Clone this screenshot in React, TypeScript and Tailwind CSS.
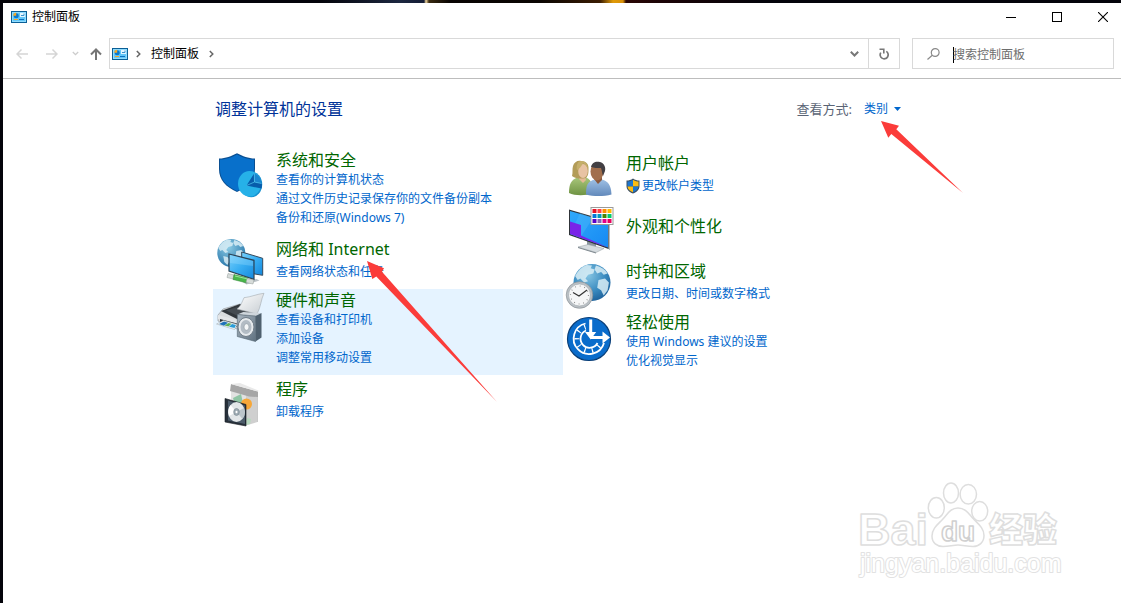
import type { ReactNode } from 'react'

type Category = {
  title: string
  links: string[]
  icon: ReactNode
  shielded?: boolean
  className?: string
}

function PanelIcon() {
  return (
    <svg className="h-3 w-4 shrink-0" viewBox="0 0 16 12" aria-hidden="true">
      <rect x="0.500" y="0.500" width="15" height="11" fill="#62c6f8" stroke="#0b5f96" />
      <rect x="1.500" y="1.500" width="13" height="9" fill="none" stroke="#8fdcff" />
      <circle cx="5.200" cy="4.800" r="2.500" fill="#0a78cc" />
      <path d="M5.200 4.800V1.800A3 3 0 0 0 2.200 4.800z" fill="#f7a823" />
      <rect x="9" y="2" width="5" height="4" fill="#e2f5ff" />
      <path d="M10 4.500h3v-2" fill="none" stroke="#3a93cf" />
      <path d="M3 8.500h4" stroke="#f7a823" />
      <path d="M8 8.500h5" stroke="#0a6fbe" />
    </svg>
  )
}

function SecurityIcon() {
  return (
    <svg className="size-12 overflow-visible" viewBox="0 0 48 48" aria-hidden="true">
      <path d="M4 6.500C11 6.500 16 4 22 1.200 28 4 33 6.500 40 6.500V17c0 11-7 18-18 23C11 35 4 28 4 17z" fill="#0a4f92" />
      <path d="M5 7.400c7 0 12-2.400 17-5 5 2.600 10 5 17 5V17c0 10-6 17-17 22C11 34 5 27 5 17z" fill="#0870cb" />
      <ellipse cx="36.200" cy="32.400" rx="11" ry="12.800" fill="#1590cf" />
      <ellipse cx="34.500" cy="31.800" rx="11.500" ry="12.800" fill="#26b1e8" />
      <path d="M39.300 21.300L31.500 33.500l15 3c.6-2.500.5-4 .2-5.500L39.500 30z" fill="#075cab" />
      <path d="M39.300 21.300L39.500 30l7 1.500c-.4-4.500-3-8.500-7.200-10.200z" fill="#1b86cf" />
      <path d="M31.500 33.500l8-3.500 7 1.500M39.300 21.300L39.500 30" fill="none" stroke="#55c8f0" strokeWidth="0.700" />
    </svg>
  )
}

function Continents() {
  return (
    <g fill="#d9eef6" opacity="0.850">
      <path d="M-13-5c2-4 5-7 9-8.500l4 .5-1 2 3 1-1 3-4 1-2 3 2 2-3 1-3-3-2 1z" />
      <path d="M3-13c4 1 7 3 9 6l-3 1-2-2-3 1-2-3z" />
      <path d="M5-2l5-1 3 3-1 6-3 4-2-4-3-2z" />
      <path d="M-8 3l4 1 3 3-3 5-3-3z" />
    </g>
  )
}

function NetworkIcon() {
  return (
    <svg className="size-12 overflow-visible" viewBox="0 0 48 48" aria-hidden="true">
      <defs>
        <radialGradient id="netGlobe" cx="0.400" cy="0.300" r="0.750">
          <stop offset="0" stopColor="#8ccbe4" />
          <stop offset="1" stopColor="#2473a8" />
        </radialGradient>
        <linearGradient id="netScreen" x1="0" y1="0" x2="1" y2="1">
          <stop offset="0" stopColor="#79d0fb" />
          <stop offset="0.500" stopColor="#38aef2" />
          <stop offset="1" stopColor="#1487dc" />
        </linearGradient>
      </defs>
      <circle cx="16.300" cy="15" r="14" fill="url(#netGlobe)" />
      <g transform="translate(16.300 15)">
        <Continents />
      </g>
      <path d="M26.700 14l21 6.300v17l-9-1.500-12-5z" fill="url(#netScreen)" stroke="#34495c" strokeWidth="1" />
      <path d="M27.500 44l14-3 3 1.500-13 4z" fill="#bcc3c8" />
      <path d="M14 16l25 6.300v19L14 33z" fill="url(#netScreen)" stroke="#2d4356" strokeWidth="1.200" />
      <path d="M15 17l23 6v5L15 25z" fill="#a5e0ff" opacity="0.300" />
      <path d="M13 35.500l8 2-1 4-8-2z" fill="#d7dcda" stroke="#919b97" strokeWidth="0.500" />
      <path d="M19 36.500l14 3.500-1 5-14-3.500z" fill="#48b64a" stroke="#2c8131" strokeWidth="0.500" />
      <path d="M20 38l13 3" stroke="#9be69a" />
      <path d="M32 40.500l7 1.500-1 4-7-1.500z" fill="#d7dcda" stroke="#919b97" strokeWidth="0.500" />
    </svg>
  )
}

function HardwareIcon() {
  return (
    <svg className="size-12 overflow-visible" viewBox="0 0 48 48" aria-hidden="true">
      <defs>
        <linearGradient id="hwPaper" x1="0" y1="0" x2="1" y2="1">
          <stop offset="0" stopColor="#ffffff" />
          <stop offset="1" stopColor="#c7cdd2" />
        </linearGradient>
        <linearGradient id="hwSpeaker" x1="0" y1="0" x2="1" y2="1">
          <stop offset="0" stopColor="#a9b5c0" />
          <stop offset="1" stopColor="#5f7180" />
        </linearGradient>
      </defs>
      <path d="M3 23l5-6 17-5 16 8v10l-19 7-19-8z" fill="#d9dcde" stroke="#8b9196" strokeWidth="0.600" />
      <path d="M6 19l19-7 16 8-19 7z" fill="#31363b" />
      <path d="M11 18.500l13-4 10 5-12 4z" fill="#454b51" />
      <path d="M29 5.700C36 5 42 2 49 1.300 46 7 46 15 42 22l-20-5c4-3 5-7 7-11.300z" fill="url(#hwPaper)" stroke="#a3a9ae" strokeWidth="0.600" />
      <path d="M3 23l19 5v4L3 27z" fill="#e3e5e7" />
      <path d="M5 27l17 4.500v3.500L5 30.500z" fill="#2b3035" />
      <path d="M1.500 32l7-3.500 14 4-3 5z" fill="#f4f7f8" stroke="#9ba4aa" strokeWidth="0.500" />
      <path d="M4 32l5-2.500 4 1.200-4 3z" fill="#1f72b8" />
      <path d="M9.500 33.500l4-2.500 3 .8-3 2.800z" fill="#5cae58" />
      <path d="M14 34.700l3-2.700 4 1-1.500 3z" fill="#2a9cd6" />
      <path d="M22.300 22.500l6-2.500 18 1-6 3z" fill="#cfd6dc" />
      <path d="M40.500 24l6-3v24.500l-6 4z" fill="#4f606e" />
      <path d="M22.300 22.500l18.200 1.500v25.500l-18.200-5z" fill="url(#hwSpeaker)" stroke="#52636f" strokeWidth="0.600" />
      <ellipse cx="31" cy="35" rx="8" ry="9.500" fill="#e6eaed" stroke="#6d7a85" />
      <ellipse cx="31" cy="35" rx="5.500" ry="7" fill="#b3bcc4" />
      <ellipse cx="31.500" cy="35" rx="2.500" ry="3.300" fill="#f5f7f8" stroke="#8b97a0" strokeWidth="0.600" />
    </svg>
  )
}

function ProgramsIcon() {
  return (
    <svg className="size-12 overflow-visible" viewBox="0 0 48 48" aria-hidden="true">
      <path d="M16 11l15 5v31l-15-4z" fill="#e2e2e2" />
      <path d="M31 16l11.500 1v27L31 47.500z" fill="#cfcfcf" />
      <path d="M31 16l11.500 1v27" fill="none" stroke="#aaaaaa" strokeWidth="0.500" />
      <path d="M16 6l27 7.500v5.500l-9-.5L15 13z" fill="#a6a6a6" />
      <path d="M16 6l9-1 18.500 7.500-.5 1z" fill="#e9e9e9" />
      <path d="M18 20l8-4 2 9-8 2z" fill="#8fc5a4" />
      <path d="M32 40l4 1-1 5-4 1z" fill="#b7d9bf" />
      <circle cx="31.500" cy="26" r="5.500" fill="#f7a738" />
      <path d="M10 20.500l21 6V48l-21-4z" fill="#27303a" stroke="#151b22" strokeWidth="0.600" />
      <path d="M13 22.500l17 5V46l-17-3.500z" fill="#4c5b6a" />
      <ellipse cx="21.500" cy="34" rx="8.300" ry="10" fill="#e2e6e8" />
      <path d="M21.500 34l-6-7c-2.500 3-3 7-1.500 11z" fill="#ffffff" />
      <path d="M21.500 34l6 7c2.500-3 3-7 1.500-11z" fill="#bcc5cb" />
      <ellipse cx="21.500" cy="34" rx="2.800" ry="3.500" fill="#9eabb3" stroke="#75848d" strokeWidth="0.600" />
      <ellipse cx="21.500" cy="34" rx="1" ry="1.300" fill="#fff" />
    </svg>
  )
}

function UsersIcon() {
  return (
    <svg className="size-12 overflow-visible" viewBox="-2 0 48 48" aria-hidden="true">
      <defs>
        <linearGradient id="womanBody" x1="0" y1="0" x2="0" y2="1">
          <stop offset="0" stopColor="#a9c77c" />
          <stop offset="1" stopColor="#6f9343" />
        </linearGradient>
        <linearGradient id="manBody" x1="0" y1="0" x2="0" y2="1">
          <stop offset="0" stopColor="#9dbfe4" />
          <stop offset="1" stopColor="#6289bb" />
        </linearGradient>
      </defs>
      <path d="M2 41c0-9 2-13 9-16h7c5 2 8 5 8 16-7 3-18 3-24 0z" fill="url(#womanBody)" />
      <path d="M12 24h6l1 4-3 3-4-4z" fill="#e3b995" />
      <path d="M5 24c1-3 0-7 1-10C7 10 11 8 14 9c5 0 8 3 7.500 8 0 4 0 6-2.500 9-5 1-10 1-14-2z" fill="#b39c58" />
      <ellipse cx="16" cy="19" rx="4.800" ry="7" fill="#e8c3a3" />
      <path d="M10 18c2-1 4-3 6-7 2 1 4 3 5 7 0-6-3-9-7-9-3 0-5 4-4 9z" fill="#c5af6a" />
      <path d="M19 42.500c0-9 1-13 9-15h7c6 2 9 5 9.500 15-8 2-18 2-25.500 0z" fill="url(#manBody)" />
      <path d="M27 27l4 5 4-4v-4h-7z" fill="#8b583c" />
      <ellipse cx="30" cy="19.500" rx="6.500" ry="9" fill="#a26f4d" />
      <path d="M24 15c1-5 5-6 9-5 4 1 6 5 5 9l-2 5c-1-3-1-5-2-8-4 0-7 0-10-1z" fill="#423f43" />
    </svg>
  )
}

const swatches = [
  ['#e81123', '#ff4343', '#ff8c00', '#ffb900'],
  ['#0078d7', '#0099bc', '#498205', '#00cc6a'],
  ['#5a00c8', '#8764b8', '#e3008c', '#ea005e'],
]

function AppearanceIcon() {
  return (
    <svg className="size-12 overflow-visible" viewBox="-2 0 48 48" aria-hidden="true">
      <defs>
        <linearGradient id="screen" x1="0" y1="0" x2="1" y2="1">
          <stop offset="0" stopColor="#2fa9fb" />
          <stop offset="1" stopColor="#1689f3" />
        </linearGradient>
      </defs>
      <path d="M20 34l9 3v5l-9-2z" fill="#8b969e" />
      <path d="M11 41l10-2.500 16 4-8 4z" fill="#d6dce0" stroke="#8e989f" strokeWidth="0.500" />
      <path d="M11 41l18 5.500v1L11 42z" fill="#7d878e" />
      <path d="M2 3.500l41 12v28L2 29z" fill="#303438" />
      <path d="M41.500 15.500l1.500.5v27.500l-1.500-.5z" fill="#b4bcc2" />
      <path d="M3 5l38 11v25.500L3 28z" fill="url(#screen)" />
      <path d="M3 28l10-21 13 5-13 20z" fill="#55bdfd" opacity="0.350" />
      <path d="M3 15.500l11 3.500v10.500L41 41.500 3 28z" fill="#7a24e8" />
      <rect x="24" y="1.500" width="22" height="17" fill="#fff" stroke="#9a9a9a" />
      {swatches.map((row, y) =>
        row.map((fill, x) => (
          <rect key={fill} x={25.500 + x * 5} y={3 + y * 5} width="4" height="4" fill={fill} />
        ))
      )}
    </svg>
  )
}

function ClockIcon() {
  return (
    <svg className="size-12 overflow-visible" viewBox="-2 0 48 48" aria-hidden="true">
      <defs>
        <radialGradient id="clockGlobe" cx="0.400" cy="0.300" r="0.750">
          <stop offset="0" stopColor="#86c5e3" />
          <stop offset="0.600" stopColor="#3a8bc0" />
          <stop offset="1" stopColor="#1c5f99" />
        </radialGradient>
      </defs>
      <circle cx="25" cy="22.500" r="18.500" fill="url(#clockGlobe)" />
      <g transform="translate(25 22.500) scale(1.300)">
        <Continents />
      </g>
      <circle cx="12.500" cy="35" r="13.300" fill="#b9bfc4" stroke="#858c91" strokeWidth="0.600" />
      <circle cx="12.500" cy="35" r="11" fill="#f5f6f7" stroke="#9ba2a7" strokeWidth="0.600" />
      <circle cx="12.500" cy="35" r="9" fill="none" stroke="#777" strokeWidth="1.200" strokeDasharray="0.700 4.012" />
      <path d="M6 32.500l6 3.500 8-6" fill="none" stroke="#333" strokeWidth="1.200" />
    </svg>
  )
}

function EaseIcon() {
  return (
    <svg className="size-12 overflow-visible" viewBox="-2 0 48 48" aria-hidden="true">
      <circle cx="22" cy="25" r="21.500" fill="#0a6ccb" stroke="#0a3f78" strokeWidth="1.200" />
      <path d="M18.500 9.500A15.500 15.500 0 1 0 37 29" fill="none" stroke="#fff" strokeWidth="1.800" />
      <path d="M18.500 13A12.200 12.200 0 1 0 33.500 29" fill="none" stroke="#fff" strokeWidth="5" strokeDasharray="1.200 6.200" />
      <path d="M19 16.500A9 9 0 1 0 30.500 29" fill="none" stroke="#fff" strokeWidth="1.800" />
      <path d="M22.200 5.500h3V18h4L23.700 25.500 18 18h4.200z" fill="#fff" />
      <path d="M24 22h11.500v-4.500l7.500 6-7.500 6V25H24z" fill="#fff" />
    </svg>
  )
}

function UacShield() {
  return (
    <svg className="h-4 w-[14px] shrink-0" viewBox="0 0 14 16" aria-hidden="true">
      <path d="M7 .5C5 2 3 2.500.5 2.500V8c0 3.500 2.500 6 6.500 7.500C11 14 13.500 11.500 13.500 8V2.500C11 2.500 9 2 7 .5z" fill="#3c5064" />
      <path d="M7 1.700v6.800H1.500v-5C3.500 3.500 5.500 2.800 7 1.700z" fill="#1d76cf" />
      <path d="M7 1.700v6.800h5.500v-5C10.500 3.500 8.500 2.800 7 1.700z" fill="#fbbc12" />
      <path d="M7 14.300V8.500H1.500c.3 2.700 2.500 4.600 5.500 5.800z" fill="#fbbc12" />
      <path d="M7 14.300V8.500h5.500c-.3 2.700-2.500 4.600-5.500 5.800z" fill="#1d76cf" />
    </svg>
  )
}

const leftColumn: Category[] = [
  {
    title: '系统和安全',
    links: ['查看你的计算机状态', '通过文件历史记录保存你的文件备份副本', '备份和还原(Windows 7)'],
    icon: <SecurityIcon />,
  },
  { title: '网络和 Internet', links: ['查看网络状态和任务'], icon: <NetworkIcon /> },
  {
    title: '硬件和声音',
    links: ['查看设备和打印机', '添加设备', '调整常用移动设置'],
    icon: <HardwareIcon />,
    className: 'bg-[#e5f3ff]',
  },
  { title: '程序', links: ['卸载程序'], icon: <ProgramsIcon /> },
]

const rightColumn: Category[] = [
  { title: '用户帐户', links: ['更改帐户类型'], icon: <UsersIcon />, shielded: true },
  { title: '外观和个性化', links: [], icon: <AppearanceIcon /> },
  { title: '时钟和区域', links: ['更改日期、时间或数字格式'], icon: <ClockIcon /> },
  { title: '轻松使用', links: ['使用 Windows 建议的设置', '优化视觉显示'], icon: <EaseIcon /> },
]

// The more links a category has, the tighter they sit under its title
function textSpacing(count: number) {
  if (count === 0) return 'pt-[13px]'
  if (count === 1) return 'gap-[3px] pt-1'
  return 'pt-px'
}

function CategoryItem({ title, links, icon, shielded, className }: Category) {
  return (
    <li className={`flex min-h-[54px] gap-[13px] pl-[2px] ${className ?? ''}`}>
      <div className="mt-[3px] h-12 w-12 shrink-0">{icon}</div>
      <div className={`flex flex-col pb-2 ${textSpacing(links.length)}`}>
        <h2 className="text-base leading-5 text-[#006600]">
          <a href="#" className="hover:underline">{title}</a>
        </h2>
        <ul>
          {links.map((link) => (
            <li key={link} className="text-xs leading-[19px] text-[#0066cc]">
              <a href="#" className="flex items-center gap-[2px] hover:underline">
                {shielded && <UacShield />}
                {link}
              </a>
            </li>
          ))}
        </ul>
      </div>
    </li>
  )
}

function Crumb() {
  return (
    <svg className="h-2 w-[5px] shrink-0" viewBox="0 0 5 8" fill="none" stroke="#666" strokeWidth="1.500" aria-hidden="true">
      <path d="M.8 1l3 3-3 3" />
    </svg>
  )
}

function TitleBar() {
  return (
    <header className="flex h-7 items-center justify-between pl-2 pr-[13px]">
      <div className="flex items-center gap-[5px]">
        <PanelIcon />
        <h1 className="text-xs leading-[18px] text-black">控制面板</h1>
      </div>
      <div className="flex items-center gap-9">
        <button type="button" aria-label="最小化">
          <svg className="size-[10px]" viewBox="0 0 10 10" stroke="#000" aria-hidden="true">
            <path d="M0 5.500h10" />
          </svg>
        </button>
        <button type="button" aria-label="最大化">
          <svg className="size-[10px]" viewBox="0 0 10 10" fill="none" stroke="#000" aria-hidden="true">
            <rect x="0.500" y="0.500" width="9" height="9" />
          </svg>
        </button>
        <button type="button" aria-label="关闭">
          <svg className="size-[10px]" viewBox="0 0 10 10" stroke="#000" strokeWidth="1.100" aria-hidden="true">
            <path d="M0 0l10 10M10 0L0 10" />
          </svg>
        </button>
      </div>
    </header>
  )
}

function Toolbar() {
  return (
    <div className="flex items-center border-b border-[#bdbdbd] pb-[9px] pl-[13px] pr-[7px] pt-[7px]">
      <div className="flex w-[93px] shrink-0 items-center">
        <button type="button" aria-label="后退" disabled className="mr-[18px]">
          <svg className="size-3" viewBox="0 0 12 12" fill="none" stroke="#d5d5d5" strokeWidth="1.500" aria-hidden="true">
            <path d="M12 6H1M5.500 1.500L1 6l4.500 4.500" />
          </svg>
        </button>
        <button type="button" aria-label="前进" disabled className="mr-[14px]">
          <svg className="size-3" viewBox="0 0 12 12" fill="none" stroke="#d5d5d5" strokeWidth="1.500" aria-hidden="true">
            <path d="M0 6h11M6.500 1.500L11 6l-4.500 4.500" />
          </svg>
        </button>
        <button type="button" aria-label="最近浏览的位置" disabled className="mr-[11px]">
          <svg className="h-[5px] w-[7px]" viewBox="0 0 7 5" fill="none" stroke="#cccccc" strokeWidth="1.300" aria-hidden="true">
            <path d="M.8 1l2.700 2.700L6.200 1" />
          </svg>
        </button>
        <button type="button" aria-label="上移">
          <svg className="size-3" viewBox="0 0 12 12" fill="none" stroke="#757575" strokeWidth="2" aria-hidden="true">
            <path d="M6 12V1.500M1 6.500l5-5 5 5" />
          </svg>
        </button>
      </div>

      <div className="flex h-[31px] flex-1 items-stretch border border-[#d9d9d9]">
        <nav aria-label="地址" className="flex flex-1 items-center pl-[2px]">
          <PanelIcon />
          <span className="ml-2 mr-[10px] flex"><Crumb /></span>
          <a href="#" className="text-xs text-black">控制面板</a>
          <span className="ml-[10px] flex"><Crumb /></span>
        </nav>
        <button type="button" aria-label="以前的位置" className="flex w-7 items-center justify-center">
          <svg className="h-[6px] w-[9px]" viewBox="0 0 9 6" fill="none" stroke="#777" strokeWidth="2" aria-hidden="true">
            <path d="M.8.800l3.700 3.700L8.200.800" />
          </svg>
        </button>
        <button type="button" aria-label="刷新" className="flex w-[31px] items-center justify-center border-l border-[#d9d9d9]">
          <svg className="h-3 w-[10px]" viewBox="0 0 10 12" fill="none" stroke="#777" strokeWidth="1.700" aria-hidden="true">
            <path d="M7.300 3.400A4 4 0 1 1 1.800 4.600" />
            <path d="M.5 1.200h4.300V5.500" strokeWidth="1.600" />
          </svg>
        </button>
      </div>

      <div className="ml-3 flex h-[31px] w-[202px] items-center border border-[#d9d9d9] pl-[14px]">
        <svg className="mr-[13px] h-3 w-[13px] shrink-0" viewBox="0 0 13 12" fill="none" stroke="#888" strokeWidth="1.200" aria-hidden="true">
          <circle cx="8.200" cy="4.500" r="3.900" />
          <path d="M5.300 7.300L.5 11.500" />
        </svg>
        <div className="flex min-w-0 flex-1 items-center pt-[3px]">
          <span className="-mr-px h-4 w-px shrink-0 bg-black" />
          <input
            type="search"
            aria-label="搜索控制面板"
            placeholder="搜索控制面板"
            className="min-w-0 flex-1 bg-transparent text-xs text-black outline-none placeholder:text-[#6d6d6d]"
          />
        </div>
      </div>
    </div>
  )
}

function Watermark() {
  return (
    <svg
      className="pointer-events-none absolute bottom-[18px] right-[46px] h-[110px] w-[225px]"
      viewBox="0 0 225 110"
      fill="#fff"
      stroke="#dedede"
      strokeWidth="1.500"
      strokeLinejoin="round"
      aria-hidden="true"
    >
      <text x="8" y="70" fontSize="45" className="font-['Liberation_Sans',sans-serif] font-bold">Bai</text>
      <text x="139" y="67" fontSize="34" className="font-['Noto_Sans_CJK_SC',sans-serif] font-black">经验</text>
      <ellipse cx="86.300" cy="32.700" rx="8" ry="10.300" />
      <ellipse cx="101" cy="18" rx="7.500" ry="10" />
      <ellipse cx="118.300" cy="19.300" rx="8.200" ry="9.800" />
      <ellipse cx="129.700" cy="36.300" rx="8" ry="9.800" />
      <path d="M108 33c-8 0-11 7-16 12s-10 9-10 16 5 10.500 11 10.500S103 70 108 70s9 1.500 15 1.500 11-4 11-11-5-11-10-16-8-11.500-16-11.500z" />
      <text x="91" y="66" fontSize="28" stroke="#d0d0d0" className="font-['Liberation_Sans',sans-serif] font-bold">du</text>
      <text x="10" y="97" fontSize="25" strokeWidth="2" stroke="#e2e2e2" className="font-['Liberation_Sans',sans-serif] [paint-order:stroke]">
        jingyan.baidu.com
      </text>
    </svg>
  )
}

export default function App() {
  return (
    <div className="flex min-h-screen flex-col bg-white font-['Noto_Sans','Noto_Sans_CJK_SC',sans-serif]">
      <div className="h-[3px] bg-[linear-gradient(90deg,#04040a_0,#04040a_320px,#1c2740_400px,#141d35_424px,#f3d9a0_426px,#3a2a10_429px,#080402_450px,#0a0502_540px,#3a1c02_600px,#e09a08_613px,#d89008_623px,#2a0604_626px,#1c0406_660px,#04040a_760px)]" />
      <div className="relative flex flex-1 flex-col border-l-[3px] border-[#04040a]">
        <TitleBar />
        <Toolbar />

        <main className="relative mx-auto w-full max-w-[698px]">
          <div className="flex items-center justify-between pb-[29px] pl-[2px] pr-[10px] pt-5">
            <h2 className="text-base leading-[21px] text-[#003399]">调整计算机的设置</h2>
            <div className="flex items-center pb-[2px] text-xs">
              <label htmlFor="view" className="mr-3 text-[13px] leading-[18px] text-[#5a6475]">查看方式:</label>
              <select id="view" defaultValue="类别" className="field-sizing-content appearance-none bg-transparent text-[#0066cc] outline-none">
                <option>类别</option>
                <option>大图标</option>
                <option>小图标</option>
              </select>
              <svg className="ml-[6px] h-1 w-[7px]" viewBox="0 0 7 4" fill="#0066cc" aria-hidden="true">
                <path d="M0 0h7L3.500 4z" />
              </svg>
            </div>
          </div>

          <div className="grid grid-cols-[350px_1fr]">
            <ul>
              {leftColumn.map((item) => (
                <CategoryItem key={item.title} {...item} />
              ))}
            </ul>
            <ul>
              {rightColumn.map((item) => (
                <CategoryItem key={item.title} {...item} />
              ))}
            </ul>
          </div>

          {/* pointer arrows */}
          <svg className="pointer-events-none absolute left-[154px] top-[182px] h-[142px] w-[131px]" viewBox="0 0 131 142" fill="#fb3c3a" aria-hidden="true">
            <path d="M0 0l17 7.300-2 3.500L130 141 9.300 15.500l-4 2.500z" />
          </svg>
          <svg className="pointer-events-none absolute left-[668px] top-[42px] h-[73px] w-[83px]" viewBox="0 0 83 73" fill="#fb3c3a" aria-hidden="true">
            <path d="M0 0l18 4.700-2.700 3.600L82 72 10.300 13l-3 3.700z" />
          </svg>
        </main>

        <Watermark />
      </div>
    </div>
  )
}
